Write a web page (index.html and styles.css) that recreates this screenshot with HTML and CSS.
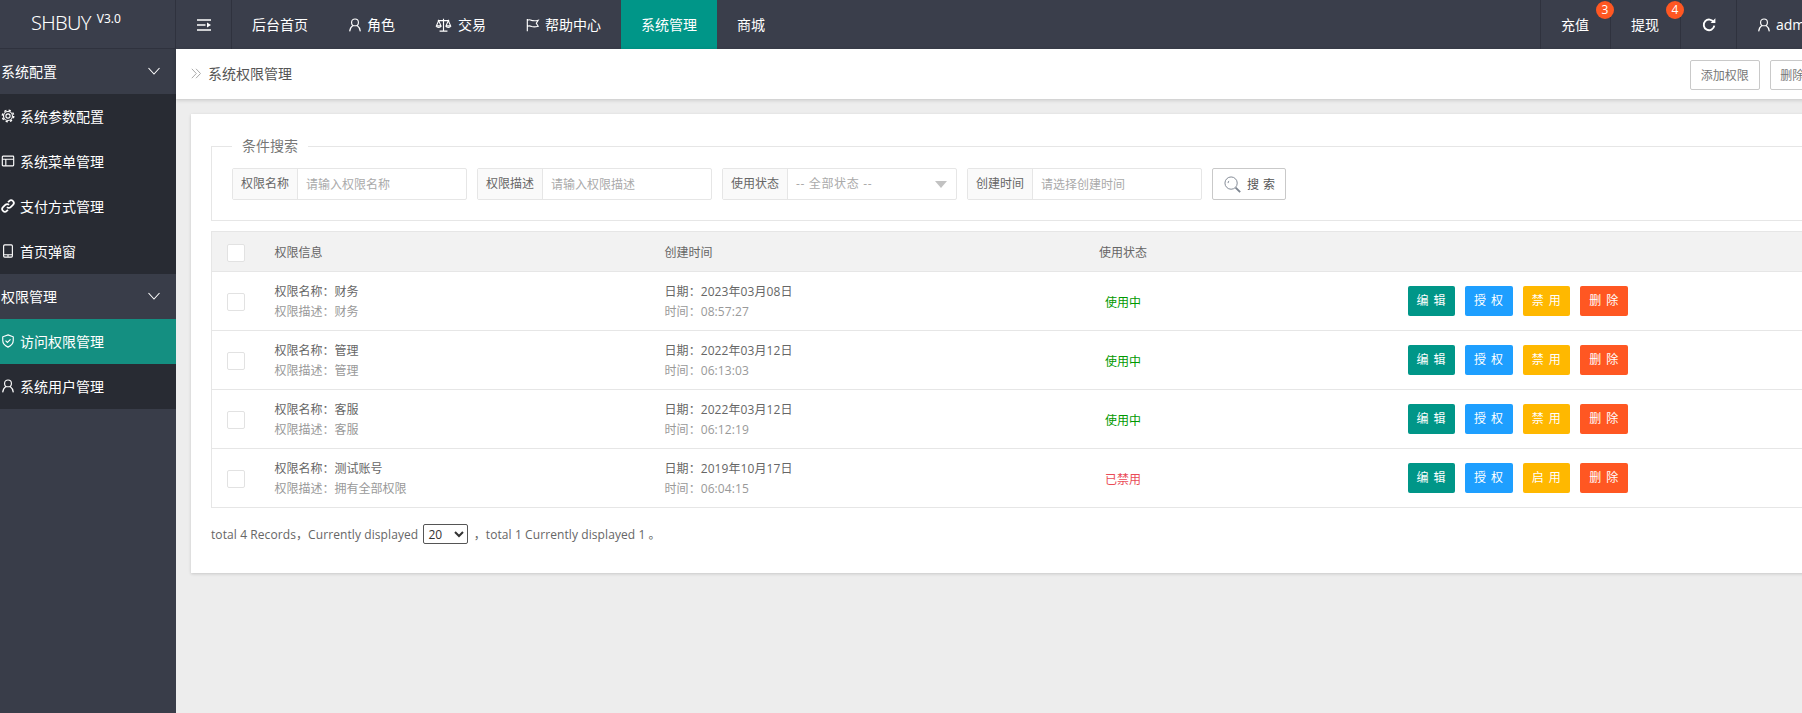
FILE: index.html
```html
<!DOCTYPE html>
<html lang="zh-CN">
<head>
<meta charset="utf-8">
<title>系统权限管理</title>
<link rel="stylesheet" href="styles.css">
</head>
<body>
<div class="app">
  <header class="topbar">
    <div class="logo"><span class="logo-name">SHBUY</span><sup class="logo-ver">V3.0</sup></div>
    <button class="nav-toggle" aria-label="menu">
      <svg class="ico-toggle" viewBox="0 0 14 12"><path d="M0 1h14M0 6h8.500M0 11h14" stroke="#fff" stroke-width="1.700" fill="none"/><path d="M10 3.600v4.800L14 6z" fill="#fff"/></svg>
    </button>
    <nav class="nav">
      <a class="nav-item">后台首页</a>
      <a class="nav-item"><svg class="ico" viewBox="0 0 16 16"><circle cx="8" cy="5" r="3.900"/><path d="M1.900 15.300c.4-3.600 2-5.700 3.700-6.800M14.100 15.300c-.4-3.600-2-5.700-3.700-6.800"/></svg>角色</a>
      <a class="nav-item"><svg class="ico ico-wide" viewBox="0 0 18 16"><path d="M9 .8v14M4.500 15h9M2.500 3h13"/><path d="M3.500 3L.9 9h5.200zM14.500 3l-2.600 6h5.200z"/><path d="M.9 9c.5 2.200 4.700 2.200 5.200 0M11.900 9c.5 2.200 4.700 2.200 5.200 0"/></svg>交易</a>
      <a class="nav-item"><svg class="ico" viewBox="0 0 16 16"><path d="M1.500 1v14M1.500 2.500c2-1 3.500-.5 5 .2 2.500 1 4.500.6 7.500-.2l-2.200 3.500 2.200 3.500c-3 .8-5 1.200-7.500.2-1.500-.7-3-1.200-5-.2"/></svg>帮助中心</a>
      <a class="nav-item is-active">系统管理</a>
      <a class="nav-item">商城</a>
    </nav>
    <div class="tools">
      <a class="tool tool-pay">充值<span class="badge">3</span></a>
      <a class="tool tool-pay">提现<span class="badge">4</span></a>
      <a class="tool tool-refresh"><svg class="ico-refresh" viewBox="0 0 14 14"><path d="M11.700 4.300A5.300 5.300 0 1 0 12.300 7.700" fill="none" stroke="#fff" stroke-width="1.900"/><path d="M8.600 4.900h4.800V.2z" fill="#fff"/></svg></a>
      <a class="tool tool-user"><svg class="ico" viewBox="0 0 16 16"><circle cx="8" cy="5" r="3.900"/><path d="M1.900 15.300c.4-3.600 2-5.700 3.700-6.800M14.100 15.300c-.4-3.600-2-5.700-3.700-6.800"/></svg>admin</a>
    </div>
  </header>

  <aside class="sidebar">
    <div class="side-group">系统配置<svg class="chev" viewBox="0 0 12 8"><path d="M.5 1l5.500 6 5.500-6"/></svg></div>
    <ul class="side-list">
      <li class="side-item"><svg class="ico" viewBox="0 0 16 16"><circle cx="8" cy="8" r="2.400"/><circle cx="8" cy="8" r="5.100"/><circle class="gear-teeth" cx="8" cy="8" r="6.500"/></svg>系统参数配置</li>
      <li class="side-item"><svg class="ico" viewBox="0 0 16 16"><rect x="1.500" y="2.500" width="13" height="11" rx=".8"/><path d="M1.500 6h13M5.500 6v7.500" /></svg>系统菜单管理</li>
      <li class="side-item"><svg class="ico ico-bold" viewBox="0 0 16 16"><path d="M6.800 9.200a3 3 0 0 0 4.300 0l2.600-2.600a3 3 0 0 0-4.300-4.300L8 3.700"/><path d="M9.200 6.800a3 3 0 0 0-4.300 0L2.300 9.400a3 3 0 0 0 4.300 4.300L8 12.300"/></svg>支付方式管理</li>
      <li class="side-item"><svg class="ico" viewBox="0 0 16 16"><rect x="3" y="1" width="10" height="14" rx="1.200"/><path d="M3 12.300h10M7 13.700h2"/></svg>首页弹窗</li>
    </ul>
    <div class="side-group">权限管理<svg class="chev" viewBox="0 0 12 8"><path d="M.5 1l5.500 6 5.500-6"/></svg></div>
    <ul class="side-list">
      <li class="side-item is-active"><svg class="ico" viewBox="0 0 16 16"><path d="M8 1l6 2.200v4.300c0 3.500-2.500 6-6 7.500-3.500-1.500-6-4-6-7.500V3.200z"/><path d="M5.200 7.600l2.100 2.100 3.600-3.600"/></svg>访问权限管理</li>
      <li class="side-item"><svg class="ico" viewBox="0 0 16 16"><circle cx="8" cy="5" r="3.900"/><path d="M1.900 15.300c.4-3.600 2-5.700 3.700-6.800M14.100 15.300c-.4-3.600-2-5.700-3.700-6.800"/></svg>系统用户管理</li>
    </ul>
  </aside>

  <main class="main">
    <div class="crumbbar">
      <div class="crumb"><svg class="crumb-ico" viewBox="0 0 11 11"><path d="M.8.8l4.500 4.700L.8 10.200M5 .8l4.500 4.700L5 10.200"/></svg>系统权限管理</div>
      <div class="crumb-actions">
        <button class="btn-line">添加权限</button>
        <button class="btn-line">删除权限</button>
      </div>
    </div>

    <section class="card">
      <fieldset class="search">
        <legend class="search-title">条件搜索</legend>
        <div class="search-row">
          <label class="field"><span class="field-label">权限名称</span><input class="field-input" placeholder="请输入权限名称"></label>
          <label class="field"><span class="field-label">权限描述</span><input class="field-input" placeholder="请输入权限描述"></label>
          <div class="field"><span class="field-label">使用状态</span><div class="field-select"><span class="select-text">-- 全部状态 --</span><i class="tri"></i></div></div>
          <label class="field"><span class="field-label">创建时间</span><input class="field-input" placeholder="请选择创建时间"></label>
          <button class="btn-search"><svg class="search-ico" viewBox="0 0 18 18"><circle cx="7.500" cy="7.500" r="6.500"/><path d="M12.300 12.300l4.800 4.800" stroke-width="2"/><path d="M4.300 7.500a3.200 3.200 0 0 1 1-2.300"/></svg>搜索</button>
        </div>
      </fieldset>

      <table class="grid">
        <colgroup>
          <col class="c-check"><col class="c-info"><col class="c-date"><col class="c-status"><col>
        </colgroup>
        <thead>
          <tr><th><span class="check check-white"></span></th><th>权限信息</th><th>创建时间</th><th class="center">使用状态</th><th></th></tr>
        </thead>
        <tbody>
          <tr>
            <td><span class="check"></span></td>
            <td><div class="line-1">权限名称：财务</div><div class="line-2">权限描述：财务</div></td>
            <td class="when"><div class="line-1">日期：2023年03月08日</div><div class="line-2">时间：08:57:27</div></td>
            <td class="center ok">使用中</td>
            <td class="ops"><div class="ops-row"><a class="op op-teal">编辑</a><a class="op op-blue">授权</a><a class="op op-amber">禁用</a><a class="op op-red">删除</a></div></td>
          </tr>
          <tr>
            <td><span class="check"></span></td>
            <td><div class="line-1">权限名称：管理</div><div class="line-2">权限描述：管理</div></td>
            <td class="when"><div class="line-1">日期：2022年03月12日</div><div class="line-2">时间：06:13:03</div></td>
            <td class="center ok">使用中</td>
            <td class="ops"><div class="ops-row"><a class="op op-teal">编辑</a><a class="op op-blue">授权</a><a class="op op-amber">禁用</a><a class="op op-red">删除</a></div></td>
          </tr>
          <tr>
            <td><span class="check"></span></td>
            <td><div class="line-1">权限名称：客服</div><div class="line-2">权限描述：客服</div></td>
            <td class="when"><div class="line-1">日期：2022年03月12日</div><div class="line-2">时间：06:12:19</div></td>
            <td class="center ok">使用中</td>
            <td class="ops"><div class="ops-row"><a class="op op-teal">编辑</a><a class="op op-blue">授权</a><a class="op op-amber">禁用</a><a class="op op-red">删除</a></div></td>
          </tr>
          <tr>
            <td><span class="check"></span></td>
            <td><div class="line-1">权限名称：测试账号</div><div class="line-2">权限描述：拥有全部权限</div></td>
            <td class="when"><div class="line-1">日期：2019年10月17日</div><div class="line-2">时间：06:04:15</div></td>
            <td class="center off">已禁用</td>
            <td class="ops"><div class="ops-row"><a class="op op-teal">编辑</a><a class="op op-blue">授权</a><a class="op op-amber">启用</a><a class="op op-red">删除</a></div></td>
          </tr>
        </tbody>
      </table>

      <div class="pager">total 4 Records，Currently displayed <select class="pager-select"><option>20</option></select> ，total 1 Currently displayed 1 。</div>
    </section>
  </main>
</div>
</body>
</html>
```

FILE: styles.css
```css
* { box-sizing: border-box; }
html, body { margin: 0; height: 100%; overflow: hidden; background: #ededed; }
body {
  font-family: "Open Sans", "Noto Sans CJK SC", sans-serif;
  font-size: 12px;
  color: #666;
}
ul { list-style: none; margin: 0; padding: 0; }

.app {
  width: 1860px;
  height: 100%;
  display: grid;
  grid-template-columns: 176px 1fr;
  grid-template-rows: 49px 1fr;
}

/* top bar */
.topbar {
  grid-column: 1 / 3;
  display: flex;
  background: #3a3e4b;
  color: #fff;
  font-size: 14px;
  line-height: 49px;
}
.logo {
  width: 176px;
  padding-left: 31px;
  border-right: 1px solid #2f323e;
  border-bottom: 1px solid #2f323e;
  display: flex;
  align-items: flex-start;
  font-family: "Noto Sans", sans-serif;
  font-weight: 300;
}
.logo-name { font-size: 20px; line-height: 46px; letter-spacing: -.7px; }
.logo-ver { font-size: 12px; line-height: 12px; margin: 13px 0 0 6px; font-weight: 400; }
.nav-toggle {
  width: 56px;
  padding: 0;
  border: 0;
  border-right: 1px solid #2f323e;
  background: none;
  display: flex;
  align-items: center;
  justify-content: center;
}
.ico-toggle { width: 14px; height: 12px; }
.nav { display: flex; }
.nav-item { padding: 0 20px; display: flex; align-items: center; }
.nav-item.is-active { background: #009688; }
.tools { display: flex; margin-left: auto; }
.tool {
  position: relative;
  border-left: 1px solid #2f323e;
  display: flex;
  align-items: center;
}
.tool-pay { width: 70px; padding-left: 20px; }
.tool-refresh { width: 56px; justify-content: center; }
.tool-user { width: 124px; padding-left: 20px; }
.ico-refresh { width: 14px; height: 14px; }
.badge {
  position: absolute;
  z-index: 2;
  top: 1px;
  right: -4px;
  width: 18px;
  height: 18px;
  border-radius: 50%;
  background: #ff5722;
  font-size: 12px;
  line-height: 18px;
  text-align: center;
}

/* shared icon */
.ico {
  width: 14px;
  height: 14px;
  margin-right: 5px;
  fill: none;
  stroke: #fff;
  stroke-width: 1.300;
  flex: none;
}
.ico-wide { width: 17px; margin-right: 6px; }
.ico-bold { stroke-width: 2; }
.gear-teeth { stroke-width: 1.700; stroke-dasharray: 2.500 2.600; }

/* sidebar */
.sidebar { background: #393d49; color: #fff; font-size: 14px; }
.side-group {
  height: 45px;
  padding: 0 16px 2px 1px;
  display: flex;
  align-items: center;
  justify-content: space-between;
}
.chev { width: 12px; height: 8px; fill: none; stroke: #fff; stroke-width: 1.100; }
.side-list { background: #282b33; }
.side-item {
  height: 45px;
  padding: 0 0 2px 1px;
  display: flex;
  align-items: center;
}
.side-item.is-active { background: #148f81; }

/* main */
.main { min-width: 0; }
.crumbbar {
  height: 50px;
  padding: 0 21px 0 15px;
  background: #fff;
  box-shadow: 0 1px 4px rgba(0, 0, 0, .18);
  display: flex;
  align-items: center;
  justify-content: space-between;
}
.crumb { padding-bottom: 2px; display: flex; align-items: center; color: #555; font-size: 14px; }
.crumb-ico { width: 11px; height: 11px; margin-right: 6px; fill: none; stroke: #aaa; stroke-width: 1; }
.crumb-actions { padding-top: 2px; display: flex; gap: 10px; }
.btn-line {
  width: 69.500px;
  height: 30px;
  padding: 0;
  border: 1px solid #c9c9c9;
  border-radius: 2px;
  background: #fff;
  color: #777;
  font: inherit;
  font-size: 12px;
}

.card {
  margin: 15px 15px 0;
  padding: 22px 20px 0;
  height: 459px;
  background: #fff;
  box-shadow: 0 1px 3px rgba(0, 0, 0, .16);
}
.search {
  margin: 0;
  padding: 12px 20px 20px;
  border: 1px solid #e6e6e6;
  min-width: 0;
}
.search-title {
  margin-left: 0;
  padding: 0 10px;
  font-size: 14px;
  line-height: 20px;
  color: #777;
}
.search-row { display: flex; gap: 10.500px; }
.field {
  width: 234.500px;
  height: 32px;
  border: 1px solid #e6e6e6;
  border-radius: 2px;
  display: flex;
  background: #fff;
}
.field-label {
  width: 65px;
  flex: none;
  padding-left: 8px;
  background: #fafafa;
  border-right: 1px solid #e6e6e6;
  line-height: 30px;
  color: #666;
}
.field-input {
  flex: 1;
  min-width: 0;
  padding: 0 8px;
  border: 0;
  outline: 0;
  background: none;
  font: inherit;
  color: #666;
}
.field-input::placeholder { color: #aaa; opacity: 1; }
.field-select {
  flex: 1;
  padding: 0 8px;
  color: #aaa;
  line-height: 30px;
  display: flex;
  align-items: center;
  justify-content: space-between;
}
.select-text { letter-spacing: .65px; }
.tri {
  width: 0;
  height: 0;
  margin-right: 1px;
  border: 6px solid transparent;
  border-top: 7px solid #c2c2c2;
  border-bottom: 0;
}
.btn-search {
  width: 74px;
  height: 32px;
  padding: 0 0 0 11px;
  border: 1px solid #c9c9c9;
  border-radius: 2px;
  background: #fff;
  color: #555;
  font: inherit;
  letter-spacing: 4px;
  display: flex;
  align-items: center;
}
.search-ico { width: 17px; height: 17px; margin-right: 6px; fill: none; stroke: #7d8590; stroke-width: 1; }

/* table */
.grid {
  width: 100%;
  margin-top: 10px;
  border-collapse: collapse;
  table-layout: fixed;
  border: 1px solid #e6e6e6;
}
.c-check { width: 48px; }
.c-info { width: 390px; }
.c-date { width: 390px; }
.c-status { width: 167px; }
.grid th, .grid td {
  padding: 0 15px;
  border-bottom: 1px solid #e6e6e6;
  text-align: left;
  font-weight: 400;
  vertical-align: middle;
}
.grid th { height: 40px; background: #f2f2f2; color: #666; }
.grid td { height: 59px; }
.grid .center { text-align: center; }
.line-1 { margin-top: 2px; line-height: 20px; color: #666; }
.line-2 { line-height: 20px; color: #999; }
.when { letter-spacing: .08px; }
.grid .ok { padding-top: 2px; color: #090; }
.grid .off { padding-top: 2px; color: #ea4b57; }
.check {
  display: block;
  width: 18px;
  height: 18px;
  margin-top: 2px;
  border: 1px solid #e2e2e2;
  border-radius: 2px;
  background: #fff;
}
.grid .ops { padding-left: 201px; }
.ops-row { display: flex; gap: 10px; }
.op {
  height: 30px;
  padding: 0 4.600px 0 9px;
  border-radius: 2px;
  color: #fff;
  line-height: 30px;
  letter-spacing: 5px;
  white-space: nowrap;
}
.op-teal { background: #009688; }
.op-blue { background: #1e9fff; }
.op-amber { background: #ffb800; }
.op-red { background: #ff5722; }

.pager { margin-top: 16px; line-height: 20px; color: #666; white-space: nowrap; letter-spacing: .09px; }
.pager-select {
  width: 45px;
  height: 20px;
  margin: 0 2px;
  padding: 0;
  border: 1px solid #555;
  border-radius: 2px;
  background: #fff;
  color: #333;
  font: inherit;
}
```
